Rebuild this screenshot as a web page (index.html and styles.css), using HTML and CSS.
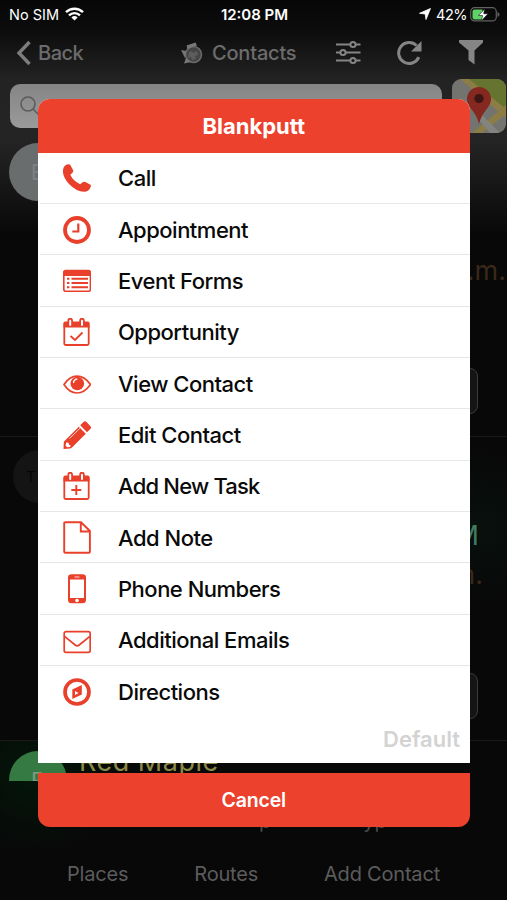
FILE: index.html
```html
<!DOCTYPE html>
<html lang="en">
<head>
    <meta charset="UTF-8">
    <meta name="viewport" content="width=device-width, initial-scale=1.0">
    <title>Contacts</title>
    <link rel="stylesheet" href="styles.css">
</head>
<body>
    <div class="app">
        <div class="status">
            <div class="status-side">
                <span class="carrier">No SIM</span>
                <svg width="19" height="14" viewBox="0 0 19 14" fill="none" stroke="#fff" stroke-width="2.4">
                    <path d="M1 5.2a12.2 12.2 0 0 1 17 0M4 8.3a8 8 0 0 1 11 0"/>
                    <path d="M9.5 13.6L6.4 10.5a4.5 4.5 0 0 1 6.2 0z" fill="#fff" stroke="none"/>
                </svg>
            </div>
            <span class="clock">12:08 PM</span>
            <div class="status-side status-right">
                <svg width="12" height="12" viewBox="0 0 12 12"><path d="M11.5 .5L7 11.5 6.2 6 .5 5.3z" fill="#fff" stroke="#fff" stroke-width=".8"/></svg>
                <span class="percent">42%</span>
                <svg width="30" height="15" viewBox="0 0 30 15">
                    <rect x=".7" y=".7" width="25.6" height="13.2" rx="4" fill="none" stroke="#626262" stroke-width="1.2"/>
                    <path d="M27.5 5v5q2-.8 2-2.500t-2-2.500z" fill="#626262"/>
                    <path d="M4.500 2.500h8v10h-8q-2 0-2-2v-6q0-2 2-2z" fill="#5fd267"/>
                    <path d="M14.800 1.800L8.500 8.500h4l-1 5.200 6.500-7h-4.300z" fill="#fff" stroke="#111" stroke-width=".6"/>
                </svg>
            </div>
        </div>

        <div class="nav">
            <div class="back">
                <svg width="16" height="26" viewBox="0 0 16 26"><path d="M13.500 2L3 13l10.500 11" fill="none" stroke="#7d7d7d" stroke-width="3.400"/></svg>
                <span class="back-text">Back</span>
            </div>
            <div class="nav-title">
                <svg width="22" height="22" viewBox="0 0 22 22">
                    <circle cx="12.500" cy="12.500" r="8" fill="#454545" stroke="#686868" stroke-width="1.600"/>
                    <path d="M5.500 3.500l9-3 1.500 3-9.500 3.500zM0 8l5 1-1 7-2-4zM5 16l-2 5.500 7-1.500z" fill="#777"/>
                    <path d="M8 10l3-1 1 2 4-2 1 4-3 1 1 3-4 1-1-3-3 1z" fill="#5c5c5c"/>
                </svg>
                <span class="title-text">Contacts</span>
            </div>
            <svg class="nav-sliders" width="26" height="26" viewBox="0 0 26 26" fill="none" stroke="#858585" stroke-width="2">
                <path d="M1 4.500h14M21 4.500h4.500M1 12.500h4M11 12.500h14.500M1 20.500h14M21 20.500h4.500"/>
                <circle cx="18" cy="4.500" r="2.600"/><circle cx="8" cy="12.500" r="2.600"/><circle cx="18" cy="20.500" r="2.600"/>
            </svg>
            <svg class="nav-refresh" width="26" height="26" viewBox="0 0 26 26">
                <path d="M22.800 17.200A10.500 10.500 0 1 1 20.500 5.500" fill="none" stroke="#858585" stroke-width="3"/>
                <path d="M25.500 1v10.500H15z" fill="#858585"/>
            </svg>
            <svg class="nav-filter" width="24" height="25" viewBox="0 0 24 25"><path d="M0 0h24v2.500l-8.500 8V24.500L9.500 20v-9.500L0 2.500z" fill="#858585"/></svg>
        </div>

        <div class="search-row">
            <div class="search">
                <svg width="20" height="20" viewBox="0 0 20 20" fill="none" stroke="#5c5c5c" stroke-width="1.600"><circle cx="8" cy="8" r="7"/><path d="M13 13l6 6"/></svg>
            </div>
            <svg width="54" height="54" viewBox="0 0 54 54">
                <defs><clipPath id="mapClip"><rect width="54" height="54" rx="9"/></clipPath></defs>
                <g clip-path="url(#mapClip)">
                    <rect width="54" height="54" fill="#73736f"/>
                    <path d="M10 0h44v36z" fill="#65742f"/>
                    <path d="M8 0h9l37 30v9z" fill="#8c7c45"/>
                    <path d="M54 26L20 54h10l24-19z" fill="#8c7c45"/>
                    <path d="M38 54l-12-14 4-4 18 18z" fill="#83837f"/>
                    <path d="M27 45q-2-8-7-14-5-6-5-11a12 12 0 0 1 24 0q0 5-5 11-5 6-7 14z" fill="#852820"/>
                    <circle cx="27" cy="19.500" r="4.600" fill="#3d1512"/>
                </g>
            </svg>
        </div>

        <div class="record record-first">
            <div class="avatar">B</div>
            <div class="record-info">
                <span class="time">a.m.</span>
                <div class="box"></div>
            </div>
        </div>
        <div class="record record-second">
            <div class="avatar avatar-dark">TH</div>
            <div class="record-info">
                <span class="time-green">PM</span>
                <span class="time">m.</span>
                <div class="box"></div>
            </div>
        </div>
        <div class="record record-third">
            <div class="half"><div class="avatar avatar-green">R</div></div>
            <div class="record-body">
                <div class="record-name">Red Maple</div>
                <div class="record-note"><span>p</span><span>yp</span></div>
            </div>
        </div>

        <div class="tabs">
            <span class="tab tab-places">Places</span>
            <span class="tab tab-routes">Routes</span>
            <span class="tab tab-add">Add Contact</span>
        </div>

        <div class="modal">
            <div class="sheet">
                <div class="sheet-header"><span class="name">Blankputt</span></div>
                <div class="item">
                    <svg class="icon" viewBox="0 0 28 28"><path d="M1.200 2.500Q4-.8 7 .6L10 6q.8 1.600-.8 3L7.300 10.800q2.700 6 9.800 9.500l2.200-1.800q1.400-1.200 3-.4l4.800 2.300q1.300.8.600 2.400-1.500 5-6.700 5Q14 28 6 20-1.500 11.500.3 4.700q.2-1.300.9-2.200z" fill="#e8402b"/></svg>
                    <span class="label">Call</span>
                </div>
                <div class="item">
                    <svg class="icon" viewBox="0 0 28 28" fill="none" stroke="#e8402b"><circle cx="14" cy="14" r="12" stroke-width="3.800"/><path d="M15.300 7.500v8h-6" stroke-width="2.200"/></svg>
                    <span class="label">Appointment</span>
                </div>
                <div class="item">
                    <svg class="icon" viewBox="0 0 28 28"><rect x=".8" y="3.500" width="26.600" height="20.700" rx="2" fill="none" stroke="#e8402b" stroke-width="1.600"/><path d="M.5 9V5q0-2 2-2h23q2 0 2 2v4z" fill="#e8402b"/><path d="M4 11.700h2.400M4 16h2.400M4 20.300h2.400M8.500 11.700H25M8.500 16H25M8.500 20.300H25" stroke="#e8402b" stroke-width="2"/></svg>
                    <span class="label">Event Forms</span>
                </div>
                <div class="item">
                    <svg class="icon" viewBox="0 0 28 28"><rect x="1.300" y="5" width="24.400" height="22" rx="1.500" fill="none" stroke="#e8402b" stroke-width="1.800"/><path d="M.5 9.500V5q0-1.500 1.500-1.500h23q1.500 0 1.500 1.500v4.500z" fill="#e8402b"/><path d="M7.200 6V2.500M19 6V2.500" stroke="#e8402b" stroke-width="5.500" stroke-linecap="round"/><path d="M7.200 7V2.800M19 7V2.800" stroke="#fff" stroke-width="2" stroke-linecap="round"/><path d="M7.500 18l4.500 4 7.500-7.500" fill="none" stroke="#e8402b" stroke-width="1.800"/></svg>
                    <span class="label">Opportunity</span>
                </div>
                <div class="item">
                    <svg class="icon" viewBox="0 0 28 28"><path d="M1 14.500Q6.500 6.200 14 6.200t13.500 8.300Q21.500 23 14 23T1 14.500z" fill="none" stroke="#e8402b" stroke-width="1.700"/><circle cx="14.300" cy="13.500" r="6.800" fill="#e8402b"/><path d="M10.500 13q.2-3.500 3.800-4" fill="none" stroke="#fff" stroke-width="1.300"/></svg>
                    <span class="label">View Contact</span>
                </div>
                <div class="item">
                    <svg class="icon" viewBox="0 0 28 28"><path d="M2 19.500L15.800 5.700l7 7L9 26.500q-.8.800-1.800.9L.5 28l.3-6.700q.2-1.200 1.200-1.800zM17.200 4.300L20.500 1q1.500-1.300 3 0l3.800 4q1.400 1.400 0 3L24 11.300z" fill="#e8402b"/><path d="M6.500 17.500L17 7.200" stroke="#fff" stroke-width=".8"/><path d="M3.200 21.500l2.300.3.500 2 1.600.5-.5 1.700-3 .3-1.500-1.500z" fill="#fff"/></svg>
                    <span class="label">Edit Contact</span>
                </div>
                <div class="item">
                    <svg class="icon" viewBox="0 0 28 28"><rect x="1.300" y="5" width="24.400" height="22" rx="1.500" fill="none" stroke="#e8402b" stroke-width="1.800"/><path d="M.5 9.500V5q0-1.500 1.500-1.500h23q1.500 0 1.500 1.500v4.500z" fill="#e8402b"/><path d="M7.200 6V2.500M19 6V2.500" stroke="#e8402b" stroke-width="5.500" stroke-linecap="round"/><path d="M7.200 7V2.800M19 7V2.800" stroke="#fff" stroke-width="2" stroke-linecap="round"/><path d="M13.300 13v10M8.300 18h10" stroke="#e8402b" stroke-width="1.900"/></svg>
                    <span class="label label-task">Add New Task</span>
                </div>
                <div class="item">
                    <svg class="icon icon-note" viewBox="0 0 28 33" fill="none" stroke="#e8402b" stroke-width="1.900"><path d="M18 1.200H2.200q-1 0-1 1v28.600q0 1 1 1h23.700q1 0 1-1V10zM17.800 1.200v9.300h9"/></svg>
                    <span class="label">Add Note</span>
                </div>
                <div class="item">
                    <svg class="icon icon-note" viewBox="0 0 28 33"><path d="M8.500 2.200h11q3.500 0 3.500 3v22.600q0 3.500-3.500 3.500h-11q-3.500 0-3.500-3.500V5.200q0-3 3.500-3z" fill="#e8402b"/><path d="M7 7.500h14V26H7z" fill="#fff"/><path d="M11.500 5h5" stroke="#fff" stroke-width=".8"/><circle cx="14" cy="28.500" r="1.800" fill="#fff"/></svg>
                    <span class="label">Phone Numbers</span>
                </div>
                <div class="item">
                    <svg class="icon icon-mail" viewBox="0 0 28 28" fill="none" stroke="#e8402b" stroke-width="1.700"><rect x="1.200" y="3.600" width="26" height="20.700" rx="1.800"/><path d="M1.200 8.200l11 8.800q2 1.600 4 0l11-8.800"/></svg>
                    <span class="label">Additional Emails</span>
                </div>
                <div class="item">
                    <svg class="icon" viewBox="0 0 28 28"><circle cx="14" cy="14" r="12" fill="none" stroke="#e8402b" stroke-width="3.700"/><path d="M9.300 11.500L18.800 7v9.500L9.300 21z" fill="#e8402b"/><path d="M12 13l3.500 2-3.500 2z" fill="#fff"/></svg>
                    <span class="label">Directions</span>
                </div>
                <div class="default"><span class="default-text">Default</span></div>
            </div>
            <div class="cancel"><span class="cancel-text">Cancel</span></div>
        </div>
    </div>
</body>
</html>
```

FILE: styles.css
```css
* {
    padding: 0;
    margin: 0;
    box-sizing: border-box;
}

body {
    background: #080808;
    font-family: Inter, "Liberation Sans", sans-serif;
}

svg {
    flex-shrink: 0;
}

span {
    white-space: nowrap;
}

.app {
    position: relative;
    display: flex;
    flex-direction: column;
    width: 507px;
    height: 900px;
    overflow: hidden;
    background: linear-gradient(#070707 0, #0c0c0c 30px, #232323 80px, #242424 140px, #080808 235px);
}

.status {
    display: flex;
    align-items: center;
    height: 28px;
    padding: 0 7px 0 9px;
    color: #fff;
    font-size: 14.5px;
}

.status-side {
    display: flex;
    flex: 1;
    align-items: center;
    gap: 6px;
}

.status-right {
    justify-content: flex-end;
    gap: 3px;
}

.status-right svg:first-child {
    margin-right: 2px;
}

.percent {
    letter-spacing: -0.5px;
}

.clock {
    font-size: 15px;
    font-weight: 600;
}

.nav {
    display: flex;
    align-items: center;
    height: 49px;
    padding: 0 24px 0 16px;
    color: #6c6c6c;
    font-size: 20px;
    font-weight: 500;
}

.back {
    display: flex;
    align-items: center;
    gap: 6px;
    width: 165px;
    letter-spacing: -0.5px;
}

.nav-title {
    display: flex;
    align-items: center;
    gap: 9px;
    width: 154px;
    letter-spacing: -0.2px;
}

.nav-refresh {
    margin-left: 35px;
}

.nav-filter {
    margin-left: auto;
}

.search-row {
    display: flex;
    align-items: center;
    gap: 10px;
    height: 58px;
    padding: 0 0 0 10px;
}

.search {
    width: 432px;
    height: 44px;
    padding: 12px 10px;
    border-radius: 10px;
    background: linear-gradient(#858585, #9a9a9a);
}

.record {
    display: flex;
    flex-shrink: 0;
    justify-content: space-between;
    height: 304px;
    padding: 10px 0 0 9px;
    border-bottom: 1px solid #191919;
}

.record-first {
    height: 302px;
    padding-top: 8px;
}

.avatar {
    width: 58px;
    height: 58px;
    border-radius: 50%;
    background: #6a6d6e;
    color: #7d8081;
    font-size: 22px;
    line-height: 58px;
    text-align: center;
}

.avatar-dark {
    width: 53px;
    height: 53px;
    margin: 3px 0 0 4px;
    background: #141414;
    color: #050505;
    font-size: 15px;
    letter-spacing: 3px;
    line-height: 53px;
}

.avatar-green {
    background: #367a43;
    color: #7c9a83;
}

.record-info {
    display: flex;
    flex-direction: column;
    align-items: flex-end;
    font-size: 27px;
    line-height: 36px;
}

.time {
    color: #3b2819;
}

.record-first .time {
    margin: 110px 1px 0 0;
}

.time-green {
    margin: 71px 28px 3px 0;
    color: #427b60;
}

.record-second .time {
    margin-right: 24px;
}

.box {
    width: 60px;
    height: 46px;
    margin: 79px 29px 0 0;
    border: 1px solid #3a3a3a;
    border-radius: 8px;
    background: #151515;
}

.record-second {
    background: radial-gradient(circle at 480px 90px, #08100d, transparent 80px);
}

.record-third {
    height: 107px;
    justify-content: flex-start;
    gap: 12px;
    border: 0;
    background: radial-gradient(circle at 35px 30px, #03170a, transparent 85px);
}

.record-second .box {
    margin-top: 80px;
}

.half {
    height: 30px;
    overflow: hidden;
}

.record-name {
    margin-top: -3px;
    color: #8b8b45;
    font-size: 27px;
    letter-spacing: 0.5px;
    line-height: 28px;
}

.record-note {
    display: flex;
    gap: 92px;
    margin-top: 33px;
    padding-left: 180px;
    color: #4a4a4a;
    font-size: 20px;
    line-height: 24px;
}

.tabs {
    display: flex;
    align-items: center;
    flex: 1;
    padding: 0 67px 1px 67px;
    justify-content: space-between;
    color: #5c5c5c;
    font-size: 20px;
    letter-spacing: -0.2px;
}

/* action sheet over the contact list */
.modal {
    position: absolute;
    top: 98.5px;
    left: 37.5px;
    display: flex;
    flex-direction: column;
    gap: 10px;
    width: 432.500px;
}

.sheet {
    height: 664.500px;
    border-radius: 12px 12px 0 0;
    background: #fff;
    overflow: hidden;
}

.sheet-header {
    display: flex;
    align-items: center;
    justify-content: center;
    height: 54px;
    background: #eb412d;
    color: #fff;
    font-size: 22px;
    font-weight: 700;
}

.item {
    display: flex;
    align-items: center;
    gap: 27px;
    height: 51.350px;
    margin-left: 2px;
    padding: 1px 0 0 23.500px;
    border-bottom: 1px solid #e6e8e8;
    color: #0a0a0a;
    font-size: 22px;
    font-weight: 500;
    letter-spacing: -0.5px;
}

.item:nth-child(12) {
    border: 0;
}

.label-task {
    letter-spacing: -0.8px;
}

.icon {
    width: 28px;
    height: 28px;
}

.icon-note {
    height: 33px;
}

.icon-mail {
    position: relative;
    top: 2px;
}

.default {
    display: flex;
    align-items: center;
    justify-content: flex-end;
    height: 44px;
    padding-right: 10px;
    color: #d3d3d3;
    font-size: 22px;
    font-weight: 600;
}

.cancel {
    display: flex;
    align-items: center;
    justify-content: center;
    height: 54px;
    border-radius: 0 0 12px 12px;
    background: #eb412d;
    color: #fff;
    font-size: 19.500px;
    font-weight: 600;
    letter-spacing: -0.2px;
}
```
